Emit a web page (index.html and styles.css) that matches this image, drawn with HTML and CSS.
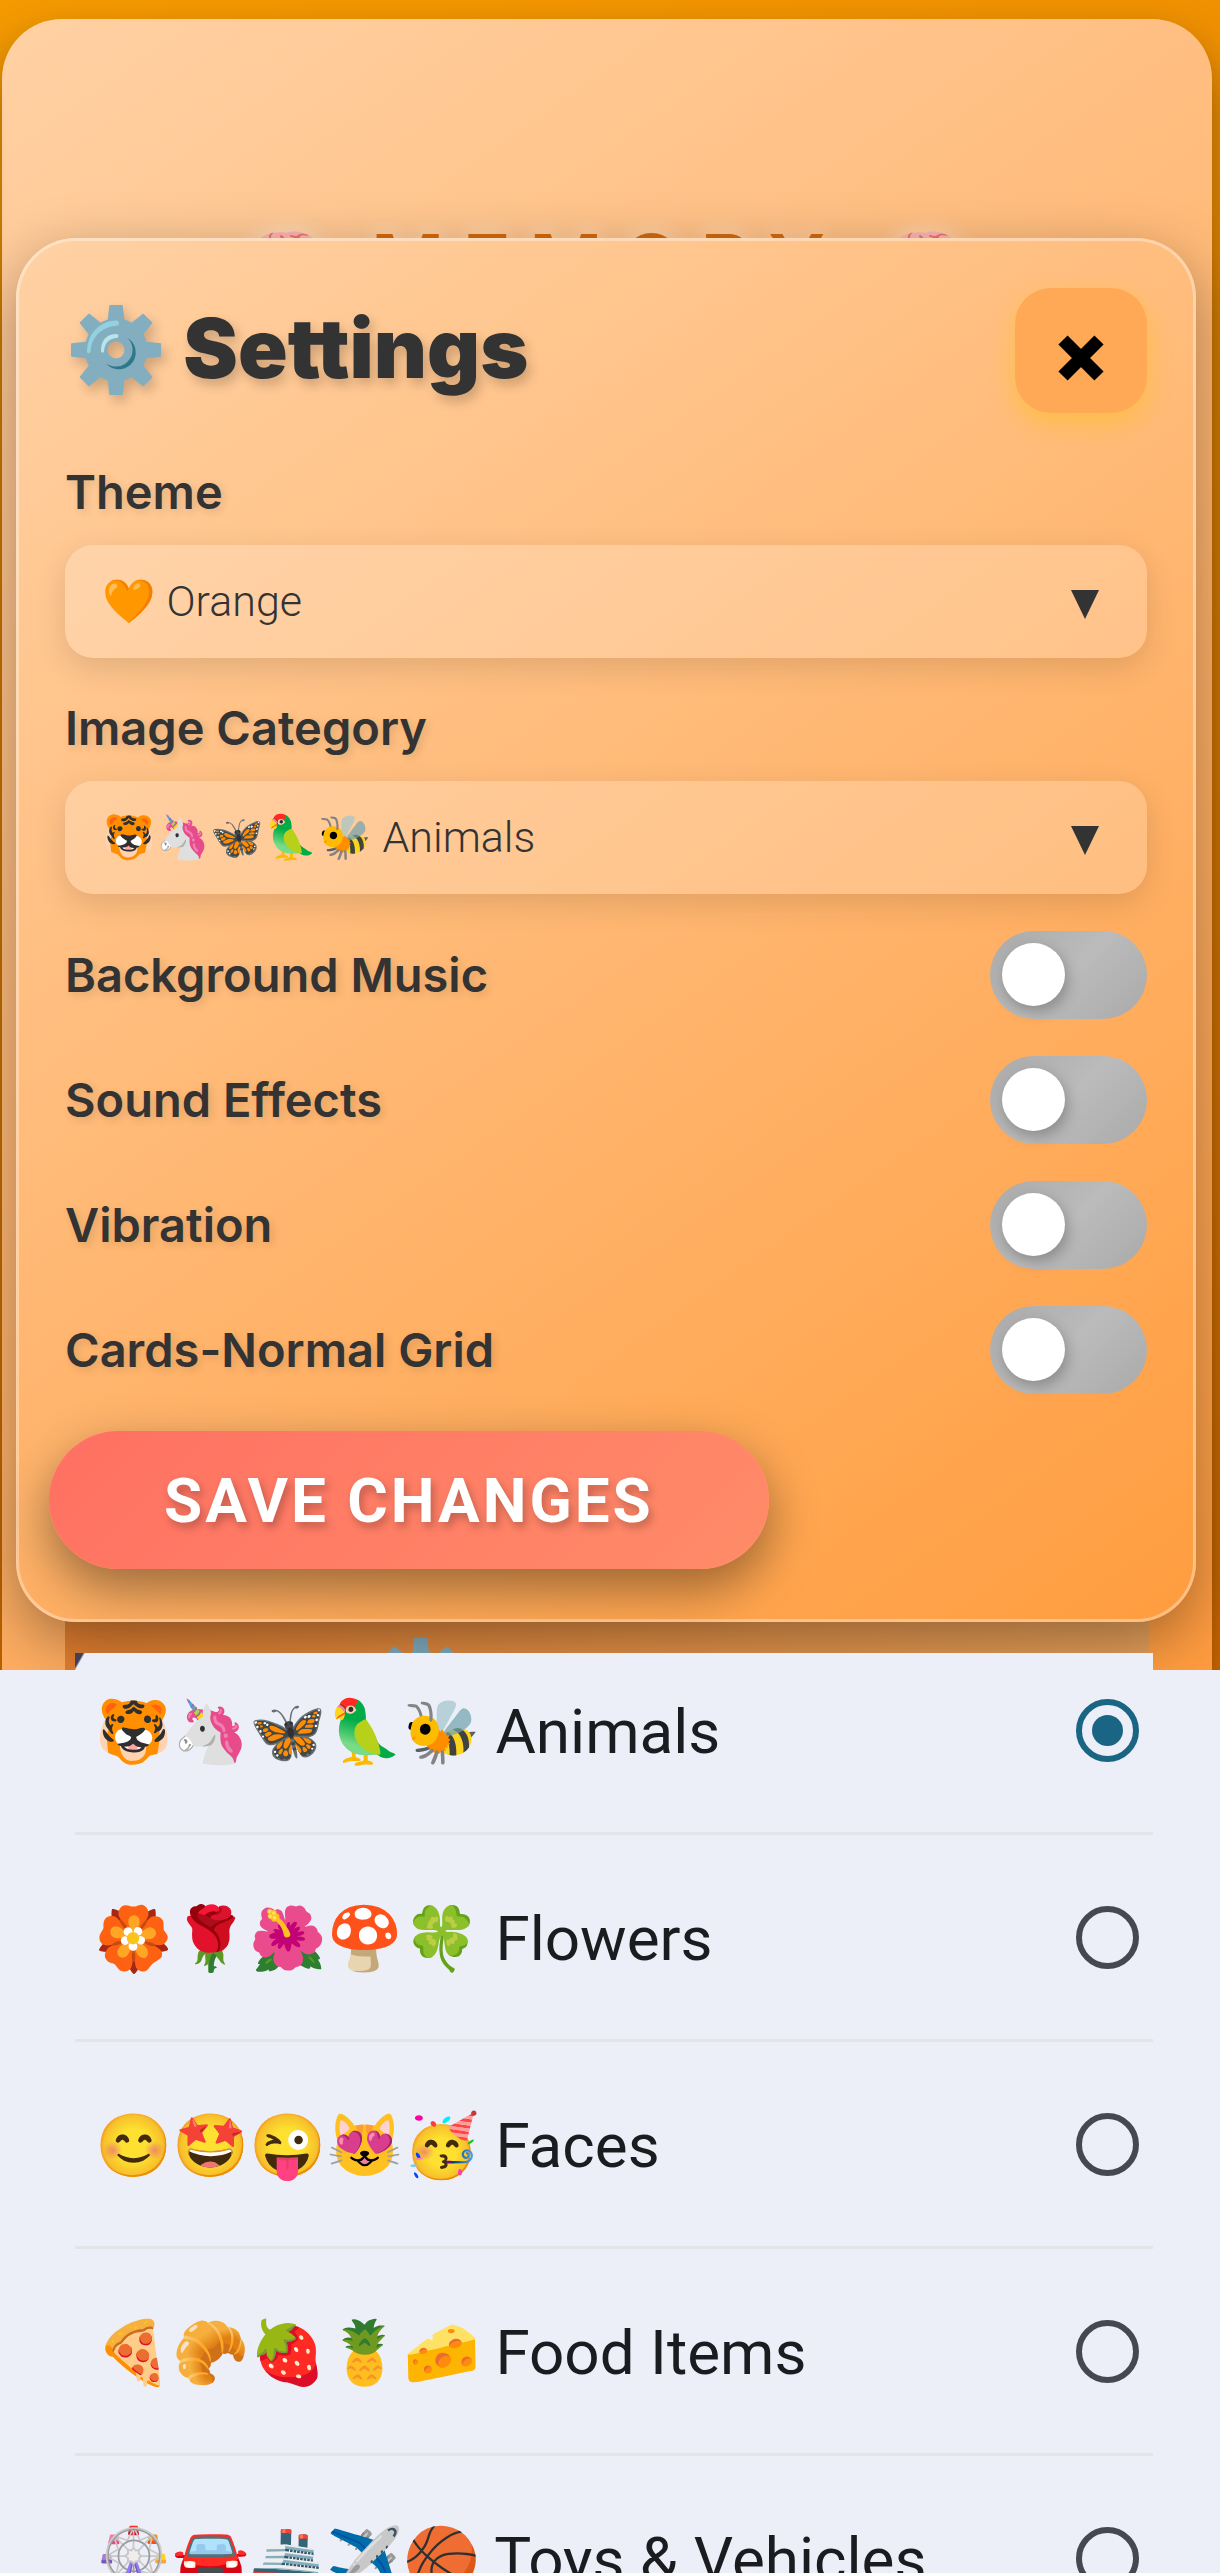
FILE: index.html
```html
<!DOCTYPE html>
<html lang="en">
<head>
  <meta charset="UTF-8">
  <meta name="viewport" content="width=device-width, initial-scale=1.0">
  <title>Memory Game</title>
  <link rel="stylesheet" href="styles.css">
</head>
<body>
  <div class="stage">
    <div class="game-container">
      <h1 class="game-title"><span class="brain">🧠</span><span>MEMORY</span><span class="brain">🧠</span></h1>
      <div class="game-card"><span class="game-gear">⚙️</span></div>
    </div>

    <div class="modal">
      <div class="modal-header">
        <h2>⚙️ Settings</h2>
        <button class="close-btn" aria-label="Close">
          <svg viewBox="0 0 46 46"><path d="M5 5L41 41M41 5L5 41" stroke="#000" stroke-width="13"/></svg>
        </button>
      </div>

      <div class="field">
        <label for="theme">Theme</label>
        <div class="select-wrap">
          <select id="theme">
            <option>🧡 Orange</option>
          </select>
        </div>
      </div>

      <div class="field">
        <label for="category">Image Category</label>
        <div class="select-wrap">
          <select id="category">
            <option>🐯🦄🦋🦜🐝 Animals</option>
            <option>🏵️🌹🌺🍄🍀 Flowers</option>
            <option>😊🤩😜😻🥳 Faces</option>
            <option>🍕🥐🍓🍍🧀 Food Items</option>
            <option>🎡🚘🚢✈️🏀 Toys &amp; Vehicles</option>
          </select>
        </div>
      </div>

      <div class="toggle-row">
        <label for="music">Background Music</label>
        <input type="checkbox" class="toggle" id="music">
      </div>
      <div class="toggle-row">
        <label for="sound">Sound Effects</label>
        <input type="checkbox" class="toggle" id="sound">
      </div>
      <div class="toggle-row">
        <label for="vibration">Vibration</label>
        <input type="checkbox" class="toggle" id="vibration">
      </div>
      <div class="toggle-row">
        <label for="grid">Cards-Normal Grid</label>
        <input type="checkbox" class="toggle" id="grid">
      </div>

      <button class="save-btn">SAVE CHANGES</button>
    </div>
  </div>

  <div class="sheet">
    <div class="sheet-panel">
      <div class="options">
        <label class="option"><span>🐯🦄🦋🦜🐝 Animals</span><input type="radio" name="category" checked></label>
        <label class="option"><span>🏵️🌹🌺🍄🍀 Flowers</span><input type="radio" name="category"></label>
        <label class="option"><span>😊🤩😜😻🥳 Faces</span><input type="radio" name="category"></label>
        <label class="option"><span>🍕🥐🍓🍍🧀 Food Items</span><input type="radio" name="category"></label>
        <label class="option"><span>🎡🚘🚢✈️🏀 Toys &amp; Vehicles</span><input type="radio" name="category"></label>
      </div>
    </div>
  </div>
</body>
</html>
```
FILE: styles.css
```css
* {
  box-sizing: border-box;
}

body {
  margin: 0;
  height: 100vh;
  display: flex;
  flex-direction: column;
  overflow: hidden;
  font-family: Roboto, "Liberation Sans", sans-serif;
  background: #edeff8;
}

.stage {
  position: relative;
  flex-shrink: 0;
  padding: 238px 24px 46px 16px;
  overflow: hidden;
  background: linear-gradient(160deg, #f59a00, #e07000);
}

/* game screen behind the dialog */
.game-container {
  position: absolute;
  inset: 19px 8px -70px 2px;
  display: flex;
  flex-direction: column;
  padding-top: 198px;
  border-radius: 60px;
  background: linear-gradient(145deg, #ffd1a4, #ff9a3c);
  box-shadow: 0 24px 48px rgba(0, 0, 0, 0.4);
}

.game-title {
  display: flex;
  justify-content: center;
  align-items: center;
  gap: 36px;
  margin: 0;
  font-family: Inter, sans-serif;
  font-size: 80px;
  font-weight: 600;
  letter-spacing: 18px;
  line-height: 92px;
  color: #d2690f;
  text-shadow: 0 0 20px rgba(255, 255, 255, 0.5);
}

.brain {
  font-size: 76px;
  letter-spacing: 0;
}

.game-card {
  flex: 1;
  display: flex;
  align-items: flex-end;
  margin: 0 63px;
  padding: 0 306px;
  background: linear-gradient(90deg, #e27f30, #e6a05a);
}

.game-gear {
  font-size: 80px;
  line-height: 116px;
}

/* settings dialog */
.modal {
  position: relative;
  display: flex;
  flex-direction: column;
  gap: 37px;
  padding: 47px 46px 50px;
  border: 3px solid rgba(255, 255, 255, 0.35);
  border-radius: 60px;
  background: linear-gradient(145deg, #ffd1a4, #ff9d3f) border-box;
  box-shadow: 0 20px 60px rgba(0, 0, 0, 0.35);
}

.modal-header {
  display: flex;
  justify-content: space-between;
  align-items: center;
  margin-bottom: 9px;
}

h2 {
  margin: 0;
  padding-bottom: 4px;
  font-family: Inter, sans-serif;
  font-size: 82px;
  font-weight: 900;
  line-height: 96px;
  color: #333;
  text-shadow: 4px 6px 12px rgba(0, 0, 0, 0.2);
}

.close-btn {
  display: flex;
  justify-content: center;
  align-items: center;
  width: 132px;
  height: 125px;
  padding: 14px 0 0;
  border: none;
  border-radius: 36px;
  background: #ffa957;
  box-shadow: 0 10px 26px rgba(255, 193, 7, 0.45);
}

.close-btn svg {
  width: 46px;
}

.field {
  display: flex;
  flex-direction: column;
  gap: 20px;
}

.field label,
.toggle-row label {
  font-family: Inter, sans-serif;
  font-size: 47px;
  font-weight: 600;
  line-height: 66px;
  color: #333;
  text-shadow: 3px 3px 8px rgba(0, 0, 0, 0.12);
}

.select-wrap {
  position: relative;
}

.select-wrap::after {
  content: "";
  position: absolute;
  top: 45px;
  right: 48px;
  width: 28px;
  height: 29px;
  background: #333;
  clip-path: polygon(0 0, 100% 0, 50% 100%);
  pointer-events: none;
}

select {
  appearance: none;
  display: block;
  width: 100%;
  height: 113px;
  padding: 0 37px 2px;
  border: none;
  border-radius: 28px;
  font-family: Roboto, sans-serif;
  font-size: 43px;
  font-weight: 300;
  color: #333;
  background: rgba(255, 255, 255, 0.2);
  box-shadow: 0 10px 32px rgba(0, 0, 0, 0.12);
}

.toggle-row {
  display: flex;
  justify-content: space-between;
  align-items: center;
}

.toggle {
  appearance: none;
  width: 157px;
  height: 88px;
  margin: 0;
  padding: 12px;
  border-radius: 44px;
  background: linear-gradient(135deg, #aaa, #bbb 50%, #aaa);
}

.toggle::before {
  content: "";
  display: block;
  width: 63px;
  height: 63px;
  border-radius: 50%;
  background: #fff;
  box-shadow: 3px 6px 14px rgba(0, 0, 0, 0.25);
}

.toggle:checked::before {
  margin-left: auto;
}

.save-btn {
  align-self: flex-start;
  height: 138px;
  margin-left: -16px;
  padding: 0 115px;
  border: none;
  border-radius: 69px;
  font-family: Roboto, sans-serif;
  font-size: 62px;
  font-weight: 700;
  letter-spacing: 3px;
  color: #fff;
  text-shadow: 3px 5px 8px rgba(0, 0, 0, 0.25);
  background: linear-gradient(135deg, #ff7062, #ff8c69);
  box-shadow: 0 20px 50px rgba(0, 0, 0, 0.4);
}

/* native style picker */
.sheet {
  position: relative;
  flex: 1;
  min-height: 0;
  background: #edeff8;
}

.sheet-panel {
  margin: -17px 67px 0 75px;
  overflow: hidden;
  background: linear-gradient(120deg, #45405a 7px, #edeff8 9px);
}

/* list is scrolled down a little */
.options {
  margin-top: -25px;
}

.stage {
  padding-bottom: 48px;
}

.option {
  display: flex;
  justify-content: space-between;
  align-items: center;
  height: 207px;
  padding: 0 14px 0 20px;
  border-bottom: 3px solid #e3e4ea;
  font-size: 62px;
  line-height: 76px;
  color: #1b1c20;
}

.option span {
  padding-top: 4px;
}

.option input {
  appearance: none;
  width: 63px;
  height: 63px;
  margin: 0;
  padding: 10px;
  border: 6px solid #454752;
  border-radius: 50%;
}

.option input:checked {
  border-color: #1b6584;
  background: #1b6584 content-box;
}
```
